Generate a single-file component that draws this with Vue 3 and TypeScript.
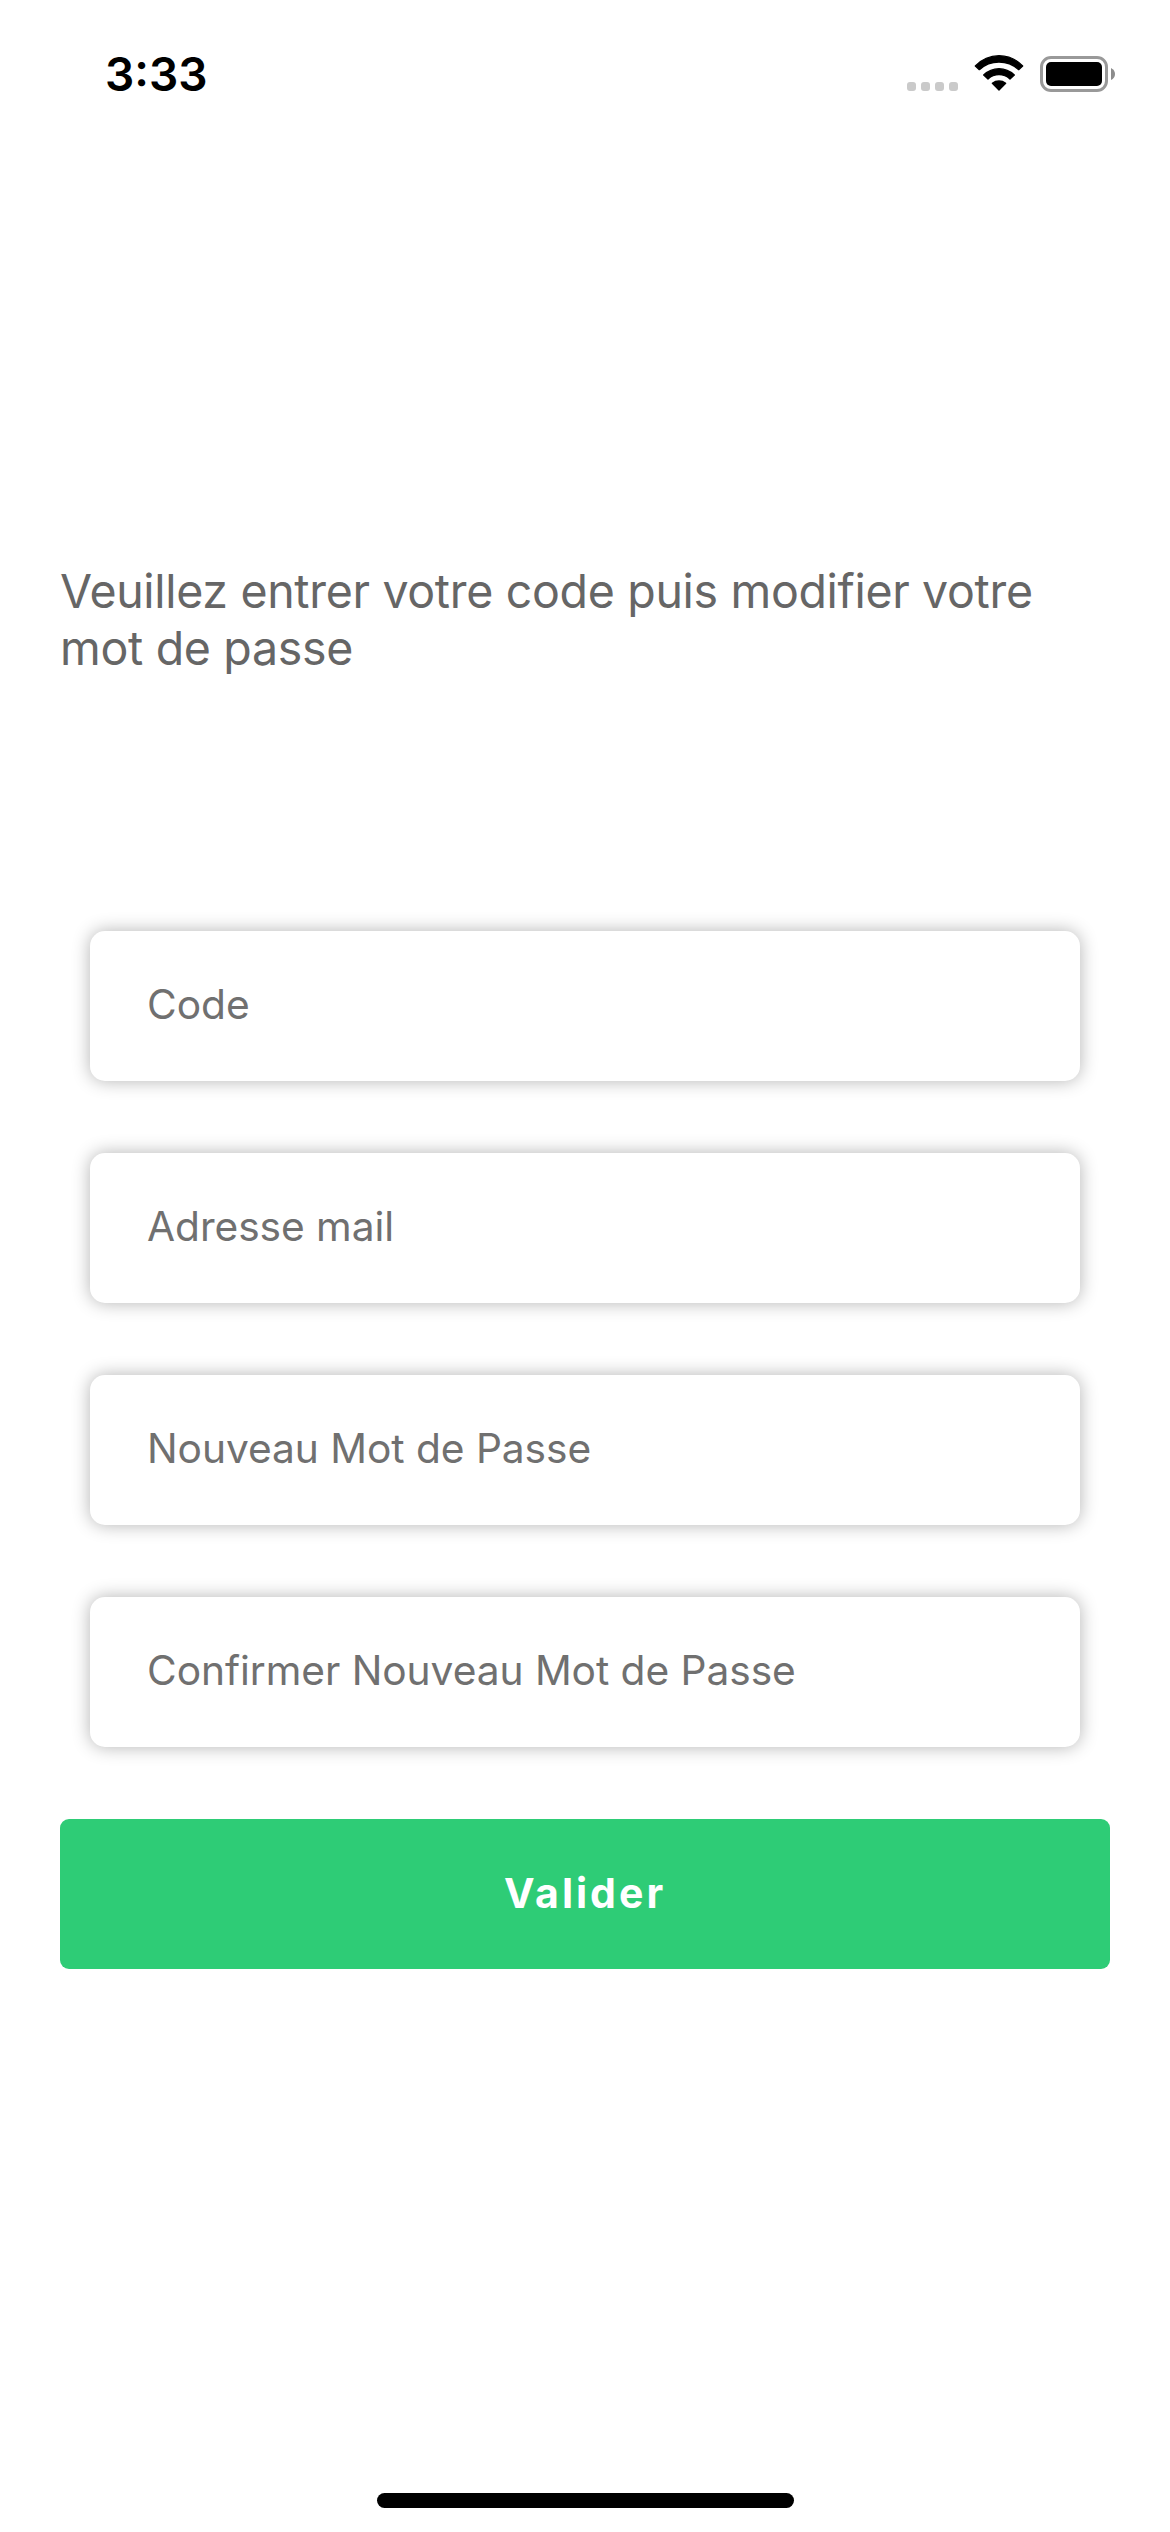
<script setup lang="ts">
import { ref } from 'vue'

interface Field {
  id: string
  label: string
}

const time = '3:33'
const fields: Field[] = [
  { id: 'code', label: 'Code' },
  { id: 'mail', label: 'Adresse mail' },
  { id: 'password', label: 'Nouveau Mot de Passe' },
  { id: 'confirm', label: 'Confirmer Nouveau Mot de Passe' },
]
const values = ref<Record<string, string>>({})
</script>

<template>
  <main class="screen">
    <header class="status">
      <span class="time">{{ time }}</span>
      <div class="indicators">
        <div class="signal"><i v-for="n in 4" :key="n" /></div>
        <svg class="wifi" width="50" height="38" viewBox="0 0 150 114">
          <g fill="#000" stroke="#000" stroke-width="4" stroke-linejoin="round">
            <path d="M4 36Q34 5 75 5Q116 5 146 36L134 47Q109 24 75 24Q41 24 16 47Z" />
            <path d="M29 63Q49 44 75 44Q101 44 121 63L108 75Q94 62 75 62Q56 62 42 75Z" />
            <path d="M55 88Q64 81 75 81Q86 81 95 88L75 108Z" />
          </g>
        </svg>
        <div class="battery">
          <div class="cell"><div class="charge" /></div>
          <svg width="4" height="12" viewBox="0 0 4 12"><path d="M0 0Q4 2 4 6Q4 10 0 12Z" fill="#8c8c8c" /></svg>
        </div>
      </div>
    </header>

    <p class="intro">Veuillez entrer votre code puis modifier votre mot de passe</p>

    <form class="form" @submit.prevent>
      <input
        v-for="field in fields"
        :key="field.id"
        v-model="values[field.id]"
        class="field"
        :placeholder="field.label"
        :aria-label="field.label"
      />
      <button class="submit" type="submit">Valider</button>
    </form>

    <div class="home" />
  </main>
</template>

<style>
body {
  background: #fff;
}
</style>

<style scoped>
.screen {
  box-sizing: border-box;
  display: flex;
  flex-direction: column;
  width: 1170px;
  height: 2532px;
  overflow: hidden;
  font-family: Inter, "Liberation Sans", sans-serif;
}
.status {
  display: flex;
  justify-content: space-between;
  flex: none;
  height: 141px;
  padding: 0 55px 0 105px;
}
.time {
  padding-top: 46px;
  font-size: 46px;
  font-weight: 600;
  line-height: 56px;
}
.indicators {
  display: flex;
  align-items: flex-start;
}
.signal {
  display: flex;
  gap: 5px;
  margin: 82px 16px 0 0;
}
.signal i {
  width: 9px;
  height: 9px;
  border-radius: 3px;
  background: #cacaca;
}
.wifi {
  margin: 54px 16px 0 0;
}
.battery {
  display: flex;
  align-items: center;
  gap: 3px;
  margin-top: 56px;
}
.cell {
  box-sizing: border-box;
  width: 68px;
  height: 36px;
  padding: 3px;
  border: 3px solid #999;
  border-radius: 11px;
}
.charge {
  height: 24px;
  border-radius: 5px;
  background: #000;
}
.intro {
  flex: none;
  width: 1050px;
  height: 368px;
  margin: 422px 60px 0;
  font-size: 46.5px;
  line-height: 57px;
  letter-spacing: -0.32px;
  color: #666;
}
.form {
  display: flex;
  flex-direction: column;
  gap: 72px;
  padding: 0 60px;
}
.field {
  box-sizing: border-box;
  height: 150px;
  margin: 0 30px;
  padding: 0 57px 4px;
  border: 0;
  border-radius: 15px;
  outline: 0;
  background: #fff;
  box-shadow: 0 0 18px rgba(0, 0, 0, 0.3);
  font: 400 40.7px Inter, "Liberation Sans", sans-serif;
  letter-spacing: -0.05px;
  color: #333;
}
.field::placeholder {
  color: #707070;
  opacity: 1;
}
.submit {
  height: 150px;
  padding: 0 0 2px;
  border: 0;
  border-radius: 9px;
  background: #2ecc76;
  color: #fff;
  font: 700 41px Inter, "Liberation Sans", sans-serif;
  letter-spacing: 3px;
}
.home {
  width: 417px;
  height: 15px;
  margin: auto 0 24px 377px;
  border-radius: 8px;
  background: #000;
}
</style>
